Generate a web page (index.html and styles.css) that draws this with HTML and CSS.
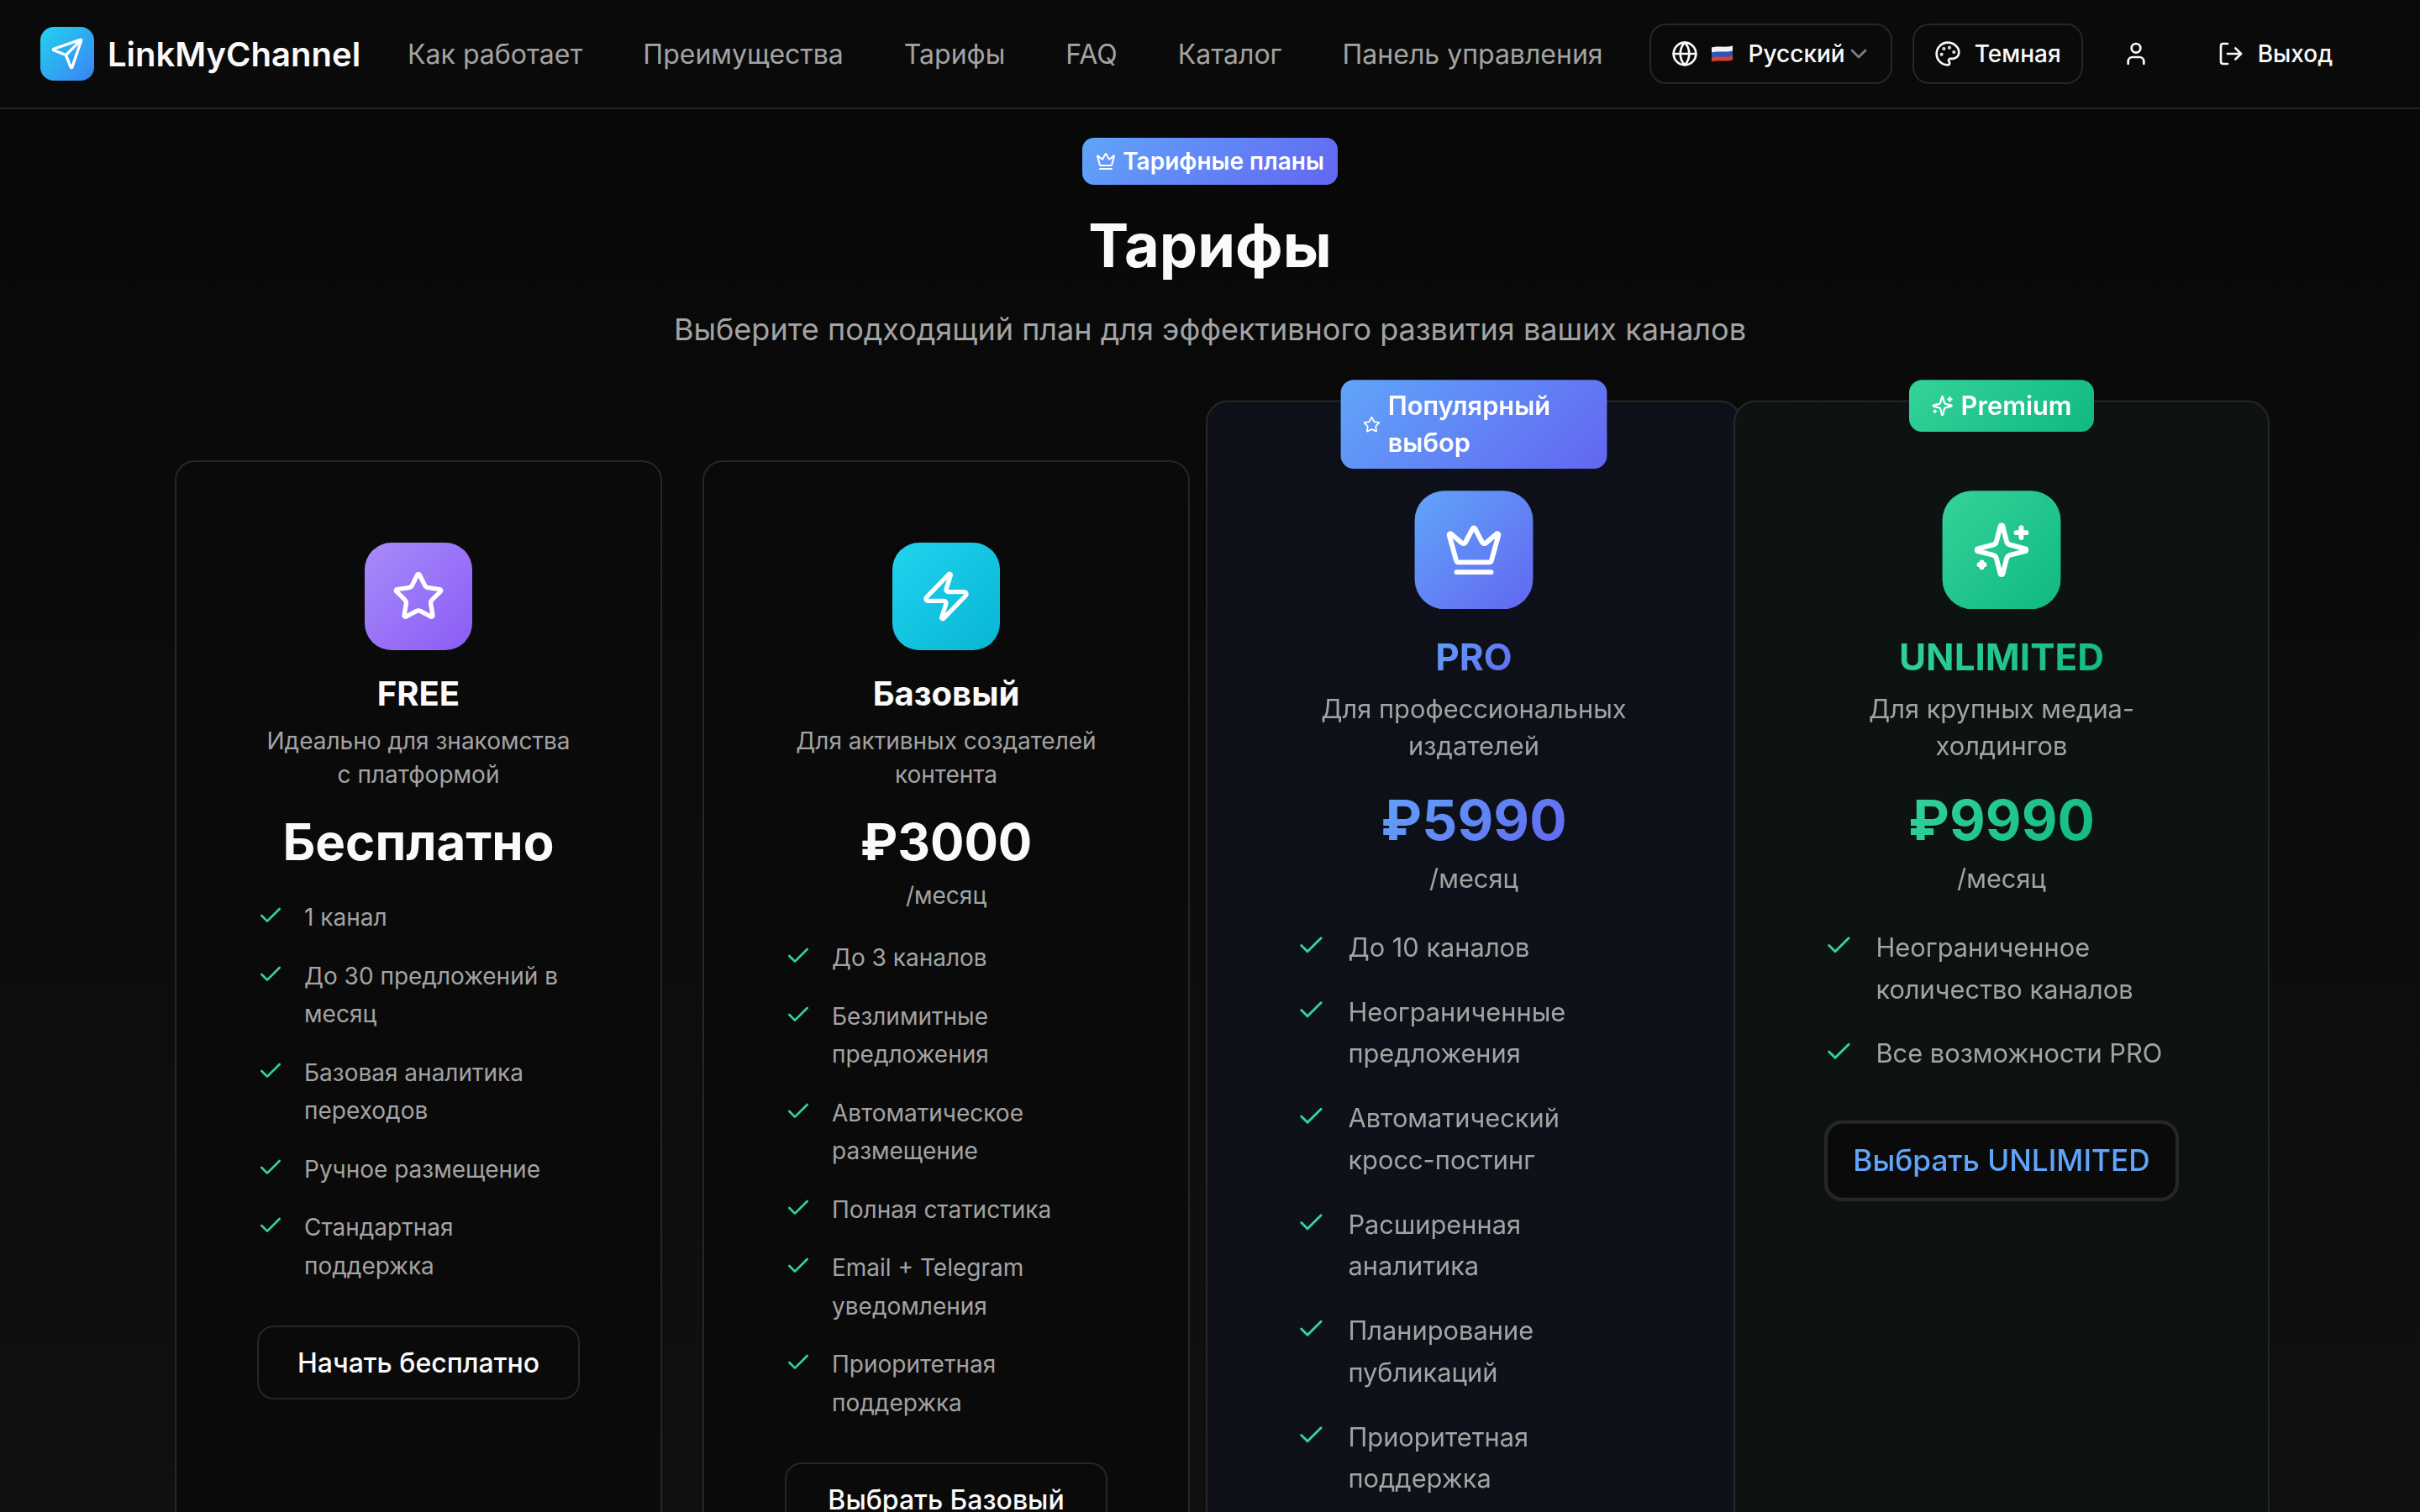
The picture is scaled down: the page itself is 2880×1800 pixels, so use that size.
FILE: index.html
```html
<!DOCTYPE html>
<html lang="ru">
<head>
<meta charset="utf-8">
<title>LinkMyChannel — Тарифы</title>
<link rel="stylesheet" href="styles.css">
</head>
<body>
<svg class="sprite" xmlns="http://www.w3.org/2000/svg">
  <symbol id="i-send" viewBox="0 0 24 24"><path d="M14.536 21.686a.5.5 0 0 0 .937-.024l6.5-19a.496.496 0 0 0-.635-.635l-19 6.5a.5.5 0 0 0-.024.937l7.93 3.18a2 2 0 0 1 1.112 1.11z"/><path d="m21.854 2.147-10.94 10.939"/></symbol>
  <symbol id="i-globe" viewBox="0 0 24 24"><circle cx="12" cy="12" r="10"/><path d="M12 2a14.5 14.5 0 0 0 0 20 14.5 14.5 0 0 0 0-20"/><path d="M2 12h20"/></symbol>
  <symbol id="i-chev" viewBox="0 0 24 24"><path d="m6 9 6 6 6-6"/></symbol>
  <symbol id="i-palette" viewBox="0 0 24 24"><circle cx="13.5" cy="6.5" r=".5" fill="currentColor"/><circle cx="17.5" cy="10.5" r=".5" fill="currentColor"/><circle cx="8.5" cy="7.5" r=".5" fill="currentColor"/><circle cx="6.5" cy="12.5" r=".5" fill="currentColor"/><path d="M12 2C6.5 2 2 6.5 2 12s4.5 10 10 10c.926 0 1.648-.746 1.648-1.688 0-.437-.18-.835-.437-1.125-.29-.289-.438-.652-.438-1.125a1.64 1.64 0 0 1 1.668-1.668h1.996c3.051 0 5.555-2.503 5.555-5.554C21.965 6.012 17.461 2 12 2z"/></symbol>
  <symbol id="i-user" viewBox="0 0 24 24"><path d="M19 21v-2a4 4 0 0 0-4-4H9a4 4 0 0 0-4 4v2"/><circle cx="12" cy="7" r="4"/></symbol>
  <symbol id="i-logout" viewBox="0 0 24 24"><path d="M9 21H5a2 2 0 0 1-2-2V5a2 2 0 0 1 2-2h4"/><path d="m16 17 5-5-5-5"/><path d="M21 12H9"/></symbol>
  <symbol id="i-crown" viewBox="0 0 24 24"><path d="M11.562 3.266a.5.5 0 0 1 .876 0L15.39 8.87a1 1 0 0 0 1.516.294L21.183 5.5a.5.5 0 0 1 .798.519l-2.834 10.246a1 1 0 0 1-.956.734H5.81a1 1 0 0 1-.957-.734L2.02 6.02a.5.5 0 0 1 .798-.519l4.276 3.664a1 1 0 0 0 1.516-.294z"/><path d="M5 21h14"/></symbol>
  <symbol id="i-star" viewBox="0 0 24 24"><path d="M11.525 2.295a.53.53 0 0 1 .95 0l2.31 4.679a2.123 2.123 0 0 0 1.595 1.16l5.166.756a.53.53 0 0 1 .294.904l-3.736 3.638a2.123 2.123 0 0 0-.611 1.878l.882 5.14a.53.53 0 0 1-.771.56l-4.618-2.428a2.122 2.122 0 0 0-1.973 0L6.396 21.01a.53.53 0 0 1-.77-.56l.881-5.139a2.122 2.122 0 0 0-.611-1.879L2.16 9.795a.53.53 0 0 1 .294-.906l5.165-.755a2.122 2.122 0 0 0 1.597-1.16z"/></symbol>
  <symbol id="i-zap" viewBox="0 0 24 24"><path d="M4 14a1 1 0 0 1-.78-1.63l9.9-10.2a.5.5 0 0 1 .86.46l-1.92 6.02A1 1 0 0 0 13 10h7a1 1 0 0 1 .78 1.63l-9.9 10.2a.5.5 0 0 1-.86-.46l1.92-6.02A1 1 0 0 0 11 14z"/></symbol>
  <symbol id="i-sparkles" viewBox="0 0 24 24"><path d="M9.937 15.5A2 2 0 0 0 8.5 14.063l-6.135-1.582a.5.5 0 0 1 0-.962L8.5 9.936A2 2 0 0 0 9.937 8.5l1.582-6.135a.5.5 0 0 1 .963 0L14.063 8.5A2 2 0 0 0 15.5 9.937l6.135 1.581a.5.5 0 0 1 0 .964L15.5 14.063a2 2 0 0 0-1.437 1.437l-1.582 6.135a.5.5 0 0 1-.963 0z"/><path d="M20 3v4"/><path d="M22 5h-4"/><path d="M4 17v2"/><path d="M5 18H3"/></symbol>
  <symbol id="i-check" viewBox="0 0 24 24"><path d="M20 6 9 17l-5-5"/></symbol>
</svg>

<header class="topbar">
  <a class="brand">
    <span class="brand-mark"><svg class="ic ic-40"><use href="#i-send"/></svg></span>
    <span class="brand-name">LinkMyChannel</span>
  </a>
  <nav class="nav">
    <a>Как работает</a>
    <a>Преимущества</a>
    <a>Тарифы</a>
    <a>FAQ</a>
    <a>Каталог</a>
    <a>Панель управления</a>
  </nav>
  <div class="actions">
    <button class="pill pill-lang">
      <svg class="ic ic-32"><use href="#i-globe"/></svg>
      <svg class="flag" viewBox="0 0 25 20" aria-label="RU"><path fill="#f2f2f4" d="M0 2.5C8 .2 16 3 25 .5v6.4C16 9.4 8 6.6 0 8.9z"/><path fill="#2f55b5" d="M0 8.4c8-2.3 16 .5 25-2v6.5c-9 2.5-17-.3-25 2z"/><path fill="#d5403b" d="M0 14.4c8-2.3 16 .5 25-2v5c-9 2.5-17-.3-25 2z"/></svg>
      <span>Русский</span>
      <svg class="ic ic-chev"><use href="#i-chev"/></svg>
    </button>
    <button class="pill pill-theme">
      <svg class="ic ic-32"><use href="#i-palette"/></svg>
      <span>Темная</span>
    </button>
    <button class="ghost ghost-user"><svg class="ic ic-32"><use href="#i-user"/></svg></button>
    <button class="ghost ghost-exit"><svg class="ic ic-32"><use href="#i-logout"/></svg><span>Выход</span></button>
  </div>
</header>

<main class="pricing">
  <div class="heading">
    <span class="tag"><svg class="ic ic-24"><use href="#i-crown"/></svg>Тарифные планы</span>
    <h1>Тарифы</h1>
    <p>Выберите подходящий план для эффективного развития ваших каналов</p>
  </div>

  <section class="plans">
    <article class="plan">
      <div class="plan-icon free"><svg class="ic ic-64"><use href="#i-star"/></svg></div>
      <h2>FREE</h2>
      <p class="desc">Идеально для знакомства с платформой</p>
      <div class="price">Бесплатно</div>
      <ul class="features">
        <li><svg class="ic ic-check"><use href="#i-check"/></svg><span>1 канал</span></li>
        <li><svg class="ic ic-check"><use href="#i-check"/></svg><span>До 30 предложений в месяц</span></li>
        <li><svg class="ic ic-check"><use href="#i-check"/></svg><span>Базовая аналитика переходов</span></li>
        <li><svg class="ic ic-check"><use href="#i-check"/></svg><span>Ручное размещение</span></li>
        <li><svg class="ic ic-check"><use href="#i-check"/></svg><span>Стандартная поддержка</span></li>
      </ul>
      <button class="cta">Начать бесплатно</button>
    </article>

    <article class="plan">
      <div class="plan-icon basic"><svg class="ic ic-64"><use href="#i-zap"/></svg></div>
      <h2>Базовый</h2>
      <p class="desc">Для активных создателей контента</p>
      <div class="price">₽3000</div>
      <div class="period">/месяц</div>
      <ul class="features">
        <li><svg class="ic ic-check"><use href="#i-check"/></svg><span>До 3 каналов</span></li>
        <li><svg class="ic ic-check"><use href="#i-check"/></svg><span>Безлимитные предложения</span></li>
        <li><svg class="ic ic-check"><use href="#i-check"/></svg><span>Автоматическое размещение</span></li>
        <li><svg class="ic ic-check"><use href="#i-check"/></svg><span>Полная статистика</span></li>
        <li><svg class="ic ic-check"><use href="#i-check"/></svg><span>Email + Telegram уведомления</span></li>
        <li><svg class="ic ic-check"><use href="#i-check"/></svg><span>Приоритетная поддержка</span></li>
      </ul>
      <button class="cta">Выбрать Базовый</button>
    </article>

    <article class="plan plan-pro">
      <span class="flag-badge blue"><svg class="ic ic-badge"><use href="#i-star"/></svg><span>Популярный выбор</span></span>
      <div class="plan-icon pro"><svg class="ic ic-64"><use href="#i-crown"/></svg></div>
      <h2 class="grad-blue">PRO</h2>
      <p class="desc">Для профессиональных издателей</p>
      <div class="price grad-blue">₽5990</div>
      <div class="period">/месяц</div>
      <ul class="features">
        <li><svg class="ic ic-check"><use href="#i-check"/></svg><span>До 10 каналов</span></li>
        <li><svg class="ic ic-check"><use href="#i-check"/></svg><span>Неограниченные предложения</span></li>
        <li><svg class="ic ic-check"><use href="#i-check"/></svg><span>Автоматический кросс-постинг</span></li>
        <li><svg class="ic ic-check"><use href="#i-check"/></svg><span>Расширенная аналитика</span></li>
        <li><svg class="ic ic-check"><use href="#i-check"/></svg><span>Планирование публикаций</span></li>
        <li><svg class="ic ic-check"><use href="#i-check"/></svg><span>Приоритетная поддержка</span></li>
      </ul>
    </article>

    <article class="plan plan-unl">
      <span class="flag-badge green"><svg class="ic ic-24"><use href="#i-sparkles"/></svg><span>Premium</span></span>
      <div class="plan-icon unl"><svg class="ic ic-64"><use href="#i-sparkles"/></svg></div>
      <h2 class="grad-green">UNLIMITED</h2>
      <p class="desc">Для крупных медиа-холдингов</p>
      <div class="price grad-green">₽9990</div>
      <div class="period">/месяц</div>
      <ul class="features">
        <li><svg class="ic ic-check"><use href="#i-check"/></svg><span>Неограниченное количество каналов</span></li>
        <li><svg class="ic ic-check"><use href="#i-check"/></svg><span>Все возможности PRO</span></li>
      </ul>
      <button class="cta cta-blue">Выбрать UNLIMITED</button>
    </article>
  </section>
</main>
</body>
</html>
```

FILE: styles.css
```css
* { box-sizing: border-box; }
html, body { margin: 0; padding: 0; height: 1800px; overflow: hidden; }
body {
  background: #0a0a0a;
  color: #fafafa;
  font-family: Inter, "Liberation Sans", sans-serif;
  font-size: 32px;
}
button { font-family: inherit; cursor: pointer; }
.sprite { display: none; }
.ic {
  fill: none;
  stroke: currentColor;
  stroke-width: 2;
  stroke-linecap: round;
  stroke-linejoin: round;
  flex: none;
  display: block;
}
.ic-24 { width: 24px; height: 24px; }
.ic-32 { width: 32px; height: 32px; }
.ic-40 { width: 40px; height: 40px; }
.ic-64 { width: 64px; height: 64px; }
.ic-chev { width: 32px; height: 32px; color: #808080; }
.ic-check { width: 32px; height: 32px; color: #34d399; margin-top: 4px; }
.ic-badge { width: 19px; height: 19px; }

/* top bar */
.topbar {
  display: flex;
  align-items: center;
  height: 130px;
  padding: 0 48px;
  border-bottom: 2px solid #262626;
  background: #0a0a0a;
}
.brand { display: flex; align-items: center; gap: 16px; }
.brand-mark {
  width: 64px; height: 64px;
  border-radius: 16px;
  background: linear-gradient(135deg, #22d3ee, #3b82f6);
  display: flex; align-items: center; justify-content: center;
  color: #fff;
}
.brand-name { font-size: 40px; font-weight: 600; }
.nav { display: flex; gap: 72px; margin-left: 56px; }
.nav a { color: #a3a3a3; font-size: 32px; font-weight: 400; }
.actions { display: flex; align-items: center; gap: 24px; margin-left: 55px; }
.pill {
  display: flex; align-items: center;
  height: 72px;
  padding: 0 24px;
  background: #0a0a0a;
  color: #fafafa;
  border: 2px solid #262626;
  border-radius: 20px;
  font-size: 28px;
  font-weight: 500;
}
.pill-lang { padding-right: 22px; }
.pill-lang svg.ic-32 { margin-right: 16px; }
.flag { width: 25px; height: 20px; margin-right: 19px; flex: none; display: block; }
.pill-theme svg { margin-right: 16px; }
.ghost {
  display: flex; align-items: center; gap: 16px;
  height: 72px;
  background: none;
  border: 0;
  color: #fafafa;
  font-size: 28px;
  font-weight: 500;
  padding: 0 24px;
}
.ghost-user { padding: 0 33px 0 23px; }

/* pricing */
.pricing {
  height: 1670px;
  padding-top: 34px;
  background: linear-gradient(180deg, #080808 0, #101010 100%);
}
.heading { text-align: center; }
.tag {
  display: inline-flex; align-items: center; gap: 8px;
  height: 56px;
  padding: 0 16px;
  border-radius: 14px;
  background: linear-gradient(135deg, #60a5fa, #6366f1);
  color: #fff;
  font-size: 28px;
  font-weight: 600;
}
.heading h1 { margin: 32px 0 32px; font-size: 72px; line-height: 80px; font-weight: 700; }
.heading p { margin: 0; font-size: 36px; line-height: 56px; color: #a3a3a3; }

.plans {
  display: grid;
  grid-template-columns: repeat(4, 580px);
  gap: 48px;
  justify-content: center;
  margin-top: 128px;
  min-height: 1430px;
}
.plan {
  position: relative;
  display: flex;
  flex-direction: column;
  align-items: center;
  padding: 96px;
  background: #0a0a0a;
  border: 2px solid #262626;
  border-radius: 24px;
  text-align: center;
}
.plan-pro { transform: scale(1.1); background: linear-gradient(135deg, #0d1018, #0e1119); z-index: 1; }
.plan-unl { transform: scale(1.1); background: linear-gradient(135deg, #0c1312, #0c1211); z-index: 2; }

.plan-icon {
  width: 128px; height: 128px;
  border-radius: 32px;
  display: flex; align-items: center; justify-content: center;
  color: #fff;
  margin-bottom: 24px;
}
.free { background: linear-gradient(135deg, #a78bfa, #8b5cf6); }
.basic { background: linear-gradient(135deg, #22d3ee, #06b6d4); }
.pro { background: linear-gradient(135deg, #60a5fa, #6366f1); }
.unl { background: linear-gradient(135deg, #34d399, #10b981); }

.plan h2 { margin: 0 0 8px; font-size: 40px; line-height: 56px; font-weight: 700; }
.desc { margin: 0; font-size: 28px; line-height: 40px; color: #a3a3a3; }
.price { margin-top: 24px; font-size: 60px; line-height: 72px; font-weight: 700; }
.period { margin-top: 8px; font-size: 28px; line-height: 40px; color: #a3a3a3; }
.grad-blue, .grad-green { -webkit-background-clip: text; background-clip: text; color: transparent; }
.grad-blue { background-image: linear-gradient(135deg, #60a5fa, #6366f1); }
.grad-green { background-image: linear-gradient(135deg, #34d399, #10b981); }

.features {
  list-style: none;
  align-self: stretch;
  margin: 32px 0 48px;
  padding: 0;
  display: flex;
  flex-direction: column;
  gap: 24px;
  text-align: left;
  font-size: 28px;
  line-height: 45.5px;
  color: #a3a3a3;
}
.features li { display: flex; gap: 24px; }

.cta {
  align-self: stretch;
  flex: none;
  height: 88px;
  background: #0a0a0a;
  color: #fafafa;
  border: 2px solid #262626;
  border-radius: 20px;
  font-size: 32px;
  font-weight: 500;
}
.cta-blue { color: #60a5fa; border-width: 4px; }

.flag-badge {
  position: absolute;
  top: -24px;
  left: 50%;
  transform: translateX(-50%);
  display: flex; align-items: center; gap: 8px;
  padding: 8px 24px;
  border-radius: 14px;
  color: #fff;
  font-size: 28px;
  line-height: 40px;
  font-weight: 600;
  text-align: left;
}
.blue { background: linear-gradient(135deg, #60a5fa, #6366f1); }
.green { background: linear-gradient(135deg, #34d399, #10b981); }
```
